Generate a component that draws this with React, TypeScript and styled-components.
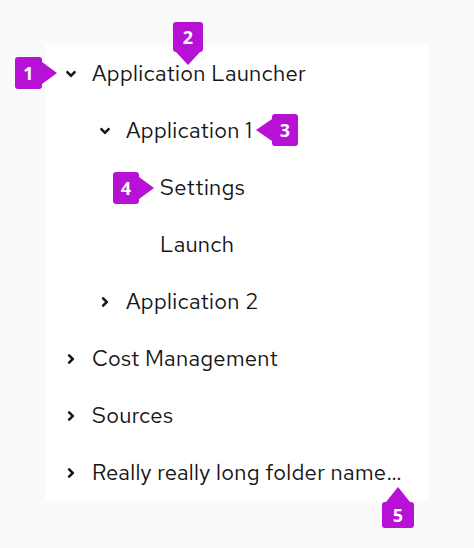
import styled, { createGlobalStyle, css } from "styled-components"
import { FaAngleDown, FaAngleRight } from "react-icons/fa"

const GlobalStyle = createGlobalStyle`
  html, body {
    margin: 0;
    padding: 0;
    background: #fafafa;
  }
  * {
    box-sizing: border-box;
  }
`

type Node = {
  name: string
  expanded?: boolean
  children?: Node[]
}

const tree: Node[] = [
  {
    name: "Application Launcher",
    expanded: true,
    children: [
      {
        name: "Application 1",
        expanded: true,
        children: [{ name: "Settings" }, { name: "Launch" }],
      },
      { name: "Application 2", children: [{ name: "Settings" }] },
    ],
  },
  { name: "Cost Management", children: [{ name: "Overview" }] },
  { name: "Sources", children: [{ name: "Cloud sources" }] },
  { name: "Really really long folder name_that keeps going", children: [{ name: "Nested" }] },
]

const Stage = styled.div`
  position: relative;
  width: 474px;
  height: 548px;
  padding: 45px 0 0 45px;
  font-family: "Red Hat Text", "Open Sans", "Liberation Sans", sans-serif;
  color: #151515;
`

const Panel = styled.div`
  width: 383px;
  background: #fff;
`

const TreeList = styled.ul`
  list-style: none;
  margin: 0;
  padding: 0;
`

const TreeItem = styled.li`
  margin: 0;
  padding: 0;
`

const Row = styled.div<{ $level: number }>`
  display: flex;
  align-items: center;
  height: 57px;
  padding-left: ${(p) => 18 + p.$level * 34}px;
  padding-right: 22px;
  font-size: 22px;
  letter-spacing: 0.3px;
`

const Toggle = styled.span`
  flex: none;
  display: flex;
  align-items: center;
  width: 29px;
  height: 20px;
  color: #151515;

  svg {
    font-size: 16px;
  }
`

const Label = styled.span`
  flex: 1;
  min-width: 0;
  line-height: 1.5;
  white-space: nowrap;
  overflow: hidden;
  text-overflow: ellipsis;
`

type Dir = "left" | "right" | "up" | "down"

const arrow = {
  right: css`
    left: 100%;
    top: 50%;
    transform: translateY(-50%);
    border-left: 15px solid #b811d6;
    border-top: 11px solid transparent;
    border-bottom: 11px solid transparent;
  `,
  left: css`
    right: 100%;
    top: 50%;
    transform: translateY(-50%);
    border-right: 16px solid #b811d6;
    border-top: 11px solid transparent;
    border-bottom: 11px solid transparent;
  `,
  down: css`
    top: 100%;
    left: 50%;
    transform: translateX(-50%);
    border-top: 13px solid #b811d6;
    border-left: 12px solid transparent;
    border-right: 12px solid transparent;
  `,
  up: css`
    bottom: 100%;
    left: 50%;
    transform: translateX(-50%);
    border-bottom: 15px solid #b811d6;
    border-left: 12px solid transparent;
    border-right: 12px solid transparent;
  `,
}

const Badge = styled.span<{ $x: number; $y: number; $w: number; $h: number; $dir: Dir }>`
  position: absolute;
  left: ${(p) => p.$x}px;
  top: ${(p) => p.$y}px;
  width: ${(p) => p.$w}px;
  height: ${(p) => p.$h}px;
  display: flex;
  align-items: center;
  justify-content: center;
  background: #b811d6;
  border-radius: 3px;
  color: #fff;
  font-family: "Open Sans", "Liberation Sans", sans-serif;
  font-weight: 700;
  font-size: 18px;

  &::after {
    content: "";
    position: absolute;
    width: 0;
    height: 0;
    ${(p) => arrow[p.$dir]}
  }
`

const Branch = ({ nodes, level }: { nodes: Node[]; level: number }) => (
  <TreeList role={level === 0 ? "tree" : "group"}>
    {nodes.map((node) => (
      <TreeItem key={node.name} role="treeitem" aria-expanded={node.children ? !!node.expanded : undefined}>
        <Row $level={level}>
          <Toggle>
            {node.children && (node.expanded ? <FaAngleDown /> : <FaAngleRight />)}
          </Toggle>
          <Label>{node.name}</Label>
        </Row>
        {node.children && node.expanded && <Branch nodes={node.children} level={level + 1} />}
      </TreeItem>
    ))}
  </TreeList>
)

export default function App() {
  return (
    <>
      <GlobalStyle />
      <Stage>
        <Panel>
          <Branch nodes={tree} level={0} />
        </Panel>
        <Badge $x={15} $y={57} $w={27} $h={32} $dir="right">1</Badge>
        <Badge $x={173} $y={22} $w={30} $h={30} $dir="down">2</Badge>
        <Badge $x={272} $y={114} $w={26} $h={32} $dir="left">3</Badge>
        <Badge $x={113} $y={172} $w={26} $h={32} $dir="right">4</Badge>
        <Badge $x={382} $y={502} $w={32} $h={26} $dir="up">5</Badge>
      </Stage>
    </>
  )
}
